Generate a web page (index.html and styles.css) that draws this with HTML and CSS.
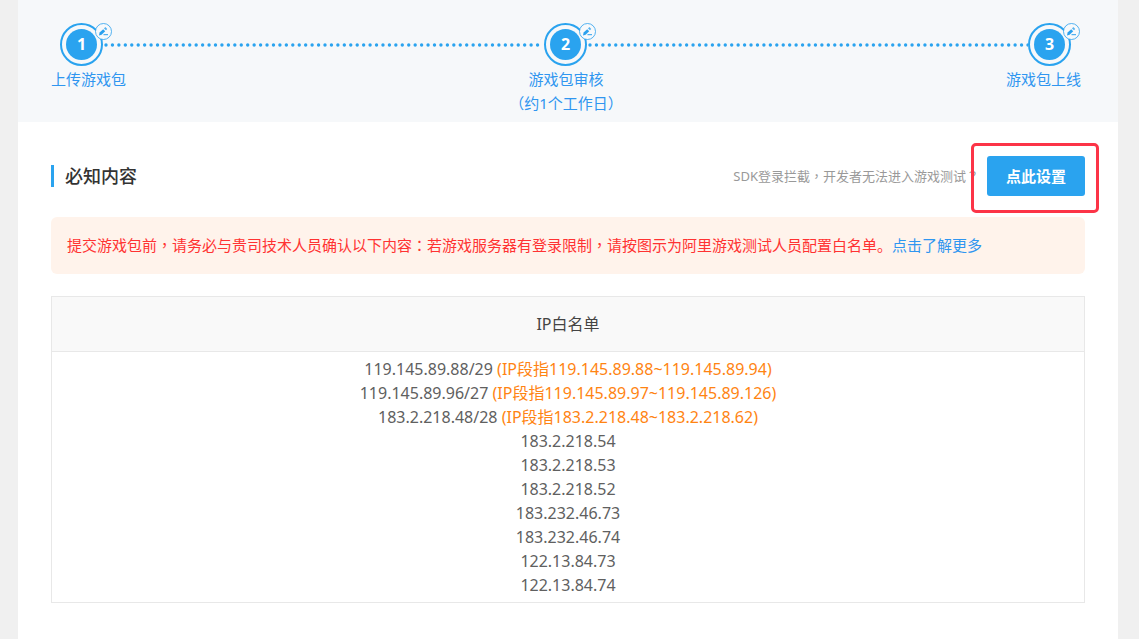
FILE: index.html
```html
<!DOCTYPE html>
<html lang="zh-CN">
<head>
<meta charset="utf-8">
<title>必知内容</title>
<link rel="stylesheet" href="styles.css">
</head>
<body>
<svg class="defs" aria-hidden="true">
  <symbol id="edit" viewBox="0 0 17 17">
    <circle cx="8.5" cy="8.5" r="8" fill="#f7f9fb" stroke="#2aa0ee" stroke-opacity=".8"/>
    <path d="M4 12.4l.6-2.8 3.6-3.4 2 2-3.6 3.5z" fill="#2aa0ee"/>
    <path d="M9 5.4l1.4-1.3 1.8 1.9-1.2 1.3z" fill="#2aa0ee" fill-opacity=".8"/>
    <path d="M8.5 11.7h4.5" stroke="#2aa0ee"/>
  </symbol>
</svg>
<main class="panel">
  <header class="steps">
    <div class="track">
      <div class="node"><span class="disc">1</span><svg class="badge"><use href="#edit"/></svg></div>
      <svg class="dots"><line x1="3" y1="2" x2="100%" y2="2" pathLength="68"/></svg>
      <div class="node"><span class="disc">2</span><svg class="badge"><use href="#edit"/></svg></div>
      <svg class="dots"><line x1="3" y1="2" x2="100%" y2="2" pathLength="68"/></svg>
      <div class="node"><span class="disc">3</span><svg class="badge"><use href="#edit"/></svg></div>
    </div>
    <div class="labels">
      <span>上传游戏包</span>
      <span class="middle">游戏包审核<br>（约1个工作日）</span>
      <span class="last">游戏包上线</span>
    </div>
  </header>
  <section class="content">
    <div class="title-row">
      <h1 class="title">必知内容</h1>
      <div class="action">
        <span class="hint">SDK登录拦截<span class="mark" lang="zh-TW">，</span>开发者无法进入游戏测试<span class="mark" lang="zh-TW">？</span></span>
        <div class="marked"><button class="button" type="button">点此设置</button></div>
      </div>
    </div>
    <p class="alert">提交游戏包前<span class="mark" lang="zh-TW">，</span>请务必与贵司技术人员确认以下内容<span class="mark" lang="zh-TW">：</span>若游戏服务器有登录限制<span class="mark" lang="zh-TW">，</span>请按图示为阿里游戏测试人员配置白名单。<a href="#">点击了解更多</a></p>
    <table class="table">
      <thead><tr><th scope="col">IP白名单</th></tr></thead>
      <tbody>
        <tr><td>119.145.89.88/29 <span class="range">(IP段指119.145.89.88~119.145.89.94)</span></td></tr>
        <tr><td>119.145.89.96/27 <span class="range">(IP段指119.145.89.97~119.145.89.126)</span></td></tr>
        <tr><td>183.2.218.48/28 <span class="range">(IP段指183.2.218.48~183.2.218.62)</span></td></tr>
        <tr><td>183.2.218.54</td></tr>
        <tr><td>183.2.218.53</td></tr>
        <tr><td>183.2.218.52</td></tr>
        <tr><td>183.232.46.73</td></tr>
        <tr><td>183.232.46.74</td></tr>
        <tr><td>122.13.84.73</td></tr>
        <tr><td>122.13.84.74</td></tr>
      </tbody>
    </table>
  </section>
</main>
</body>
</html>
```
FILE: styles.css
```css
* { box-sizing: border-box; }
body {
  margin: 0;
  background: #f0f0f0;
  color: #606060;
  font: 15px/24px "Noto Sans", "Noto Sans CJK SC", sans-serif;
}
a { color: #2f96f0; text-decoration: none; }
.defs { position: absolute; width: 0; height: 0; }
.mark { font-family: "Noto Sans CJK TC", sans-serif; line-height: 1; }
.panel {
  min-height: 100vh;
  margin: 0 21px 0 18px;
  background: #fff;
}
.steps {
  padding: 23px 33px 7px;
  background: #f6f8fa;
  color: #2f96f0;
}
.track {
  display: flex;
  align-items: center;
  padding: 0 14px 0 9px;
}
.node {
  position: relative;
  flex: none;
  display: grid;
  place-items: center;
  width: 43px;
  height: 43px;
  border: 2px solid #2aa3ef;
  border-radius: 50%;
}
.disc {
  width: 31px;
  height: 31px;
  border-radius: 50%;
  background: #2aa3ef;
  color: #fff;
  font-size: 16px;
  font-weight: 700;
  line-height: 31px;
  text-align: center;
}
.badge {
  position: absolute;
  top: -2px;
  right: -11px;
  width: 17px;
  height: 17px;
}
.dots {
  flex: 1;
  min-width: 0;
  height: 4px;
  overflow: hidden;
}
.dots line {
  stroke: #2aa3ef;
  stroke-width: 3.4;
  stroke-linecap: round;
  stroke-dasharray: 0 1;
}
.labels {
  display: grid;
  grid-template-columns: 1fr auto 1fr;
  margin-top: 1px;
  padding-right: 4px;
}
.middle { text-align: center; }
.last { text-align: right; }
.content { padding: 34px 33px; }
.title-row, .action {
  display: flex;
  align-items: center;
}
.title-row { justify-content: space-between; }
.title {
  margin: 0;
  padding-left: 11px;
  border-left: 3px solid #2aa3ef;
  color: #333;
  font-size: 18px;
  font-weight: 500;
  line-height: 22px;
}
.action { gap: 8px; }
.hint { color: #999; font-size: 13px; }
.marked { position: relative; }
.marked::after {
  content: "";
  position: absolute;
  inset: -13px -14px -17px -16px;
  border: 3px solid #fc3447;
  border-radius: 5px;
  pointer-events: none;
}
.button {
  display: block;
  height: 40px;
  padding: 0 19px;
  border: 0;
  border-radius: 3px;
  background: #2aa3ef;
  color: #fff;
  font: inherit;
  font-weight: 700;
}
.alert {
  margin: 21px 0 22px;
  padding: 16px 16px 17px;
  border-radius: 6px;
  background: #fff3eb;
  color: #ff3232;
}
.table {
  width: 100%;
  border: 1px solid #e8e8e8;
  border-spacing: 0;
  font-size: 16px;
  text-align: center;
}
.table th {
  padding: 15px 0;
  border-bottom: 1px solid #e8e8e8;
  background: #f9f9f9;
  color: #444;
  font-weight: 400;
}
.table td { padding: 0; }
.table tr:first-child td { padding-top: 5px; }
.table tr:last-child td { padding-bottom: 5px; }
.table thead tr th { padding: 15px 0; }
.range { color: #ff8412; }
```
